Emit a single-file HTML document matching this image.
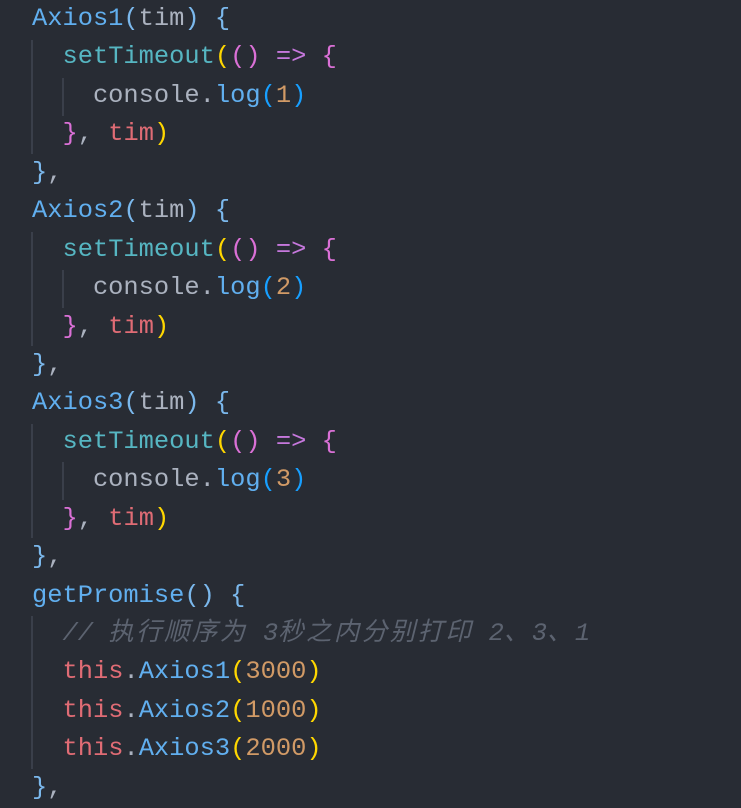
<!DOCTYPE html>
<html><head><meta charset="utf-8"><style>
html,body{margin:0;padding:0;background:#282c34;width:741px;height:808px;overflow:hidden}
.c{position:absolute;left:0;top:0;font-family:"Liberation Mono","Noto Sans CJK SC",monospace;font-size:25.4px;line-height:38.45px;color:#abb2bf}
.l{height:38.45px;padding-left:32px;white-space:pre}
.b{color:#61afef}.p{color:#7bb8ec}.cy{color:#56b6c2}.y{color:#ffd700}.k{color:#da70d6}.v{color:#c678dd}.o{color:#d19a66}.r{color:#e06c75}.cm{color:#5c6370;font-style:italic}.bl{color:#179fff}
.z{letter-spacing:2.5px}
.g{position:absolute;width:2px;background:#3a3f4a}
</style></head><body>
<div class="g" style="left:31px;top:40px;height:114px"></div>
<div class="g" style="left:62px;top:78px;height:38px"></div>
<div class="g" style="left:31px;top:232px;height:114px"></div>
<div class="g" style="left:62px;top:270px;height:38px"></div>
<div class="g" style="left:31px;top:424px;height:114px"></div>
<div class="g" style="left:62px;top:462px;height:38px"></div>
<div class="g" style="left:31px;top:616px;height:153px"></div>
<div class="c"><div class="l"><span class="b">Axios1</span><span class="p">(</span>tim<span class="p">)</span> <span class="p">{</span></div><div class="l">  <span class="cy">setTimeout</span><span class="y">(</span><span class="k">()</span> <span class="v">=&gt;</span> <span class="k">{</span></div><div class="l">    console.<span class="b">log</span><span class="bl">(</span><span class="o">1</span><span class="bl">)</span></div><div class="l">  <span class="k">}</span>, <span class="r">tim</span><span class="y">)</span></div><div class="l"><span class="p">}</span>,</div><div class="l"><span class="b">Axios2</span><span class="p">(</span>tim<span class="p">)</span> <span class="p">{</span></div><div class="l">  <span class="cy">setTimeout</span><span class="y">(</span><span class="k">()</span> <span class="v">=&gt;</span> <span class="k">{</span></div><div class="l">    console.<span class="b">log</span><span class="bl">(</span><span class="o">2</span><span class="bl">)</span></div><div class="l">  <span class="k">}</span>, <span class="r">tim</span><span class="y">)</span></div><div class="l"><span class="p">}</span>,</div><div class="l"><span class="b">Axios3</span><span class="p">(</span>tim<span class="p">)</span> <span class="p">{</span></div><div class="l">  <span class="cy">setTimeout</span><span class="y">(</span><span class="k">()</span> <span class="v">=&gt;</span> <span class="k">{</span></div><div class="l">    console.<span class="b">log</span><span class="bl">(</span><span class="o">3</span><span class="bl">)</span></div><div class="l">  <span class="k">}</span>, <span class="r">tim</span><span class="y">)</span></div><div class="l"><span class="p">}</span>,</div><div class="l"><span class="b">getPromise</span><span class="p">()</span> <span class="p">{</span></div><div class="l">  <span class="cm">// <span class="z">执行顺序为</span> 3<span class="z">秒之内分别打印</span> 2<span class="z">、</span>3<span class="z">、</span>1</span></div><div class="l">  <span class="r">this</span>.<span class="b">Axios1</span><span class="y">(</span><span class="o">3000</span><span class="y">)</span></div><div class="l">  <span class="r">this</span>.<span class="b">Axios2</span><span class="y">(</span><span class="o">1000</span><span class="y">)</span></div><div class="l">  <span class="r">this</span>.<span class="b">Axios3</span><span class="y">(</span><span class="o">2000</span><span class="y">)</span></div><div class="l"><span class="p">}</span>,</div></div>
</body></html>
